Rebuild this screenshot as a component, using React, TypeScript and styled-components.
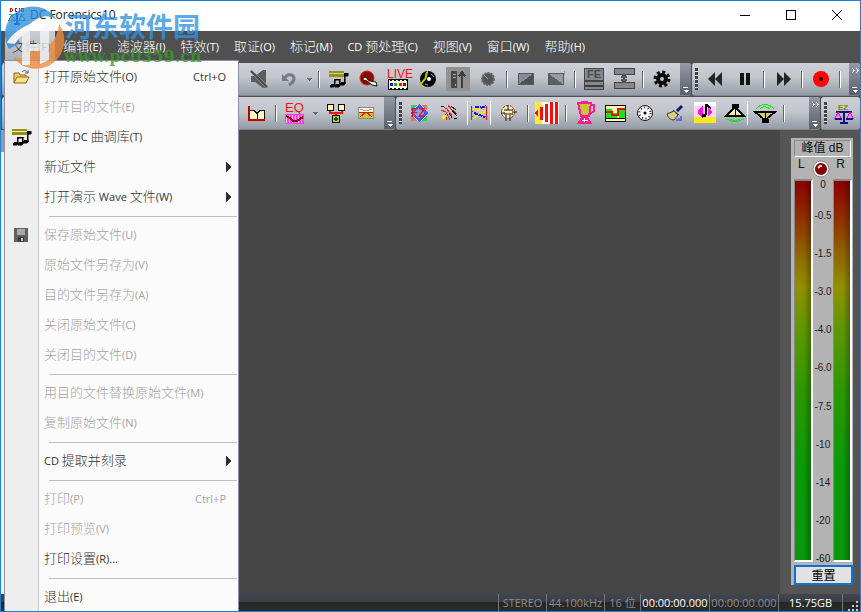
import React from "react";
import styled, { createGlobalStyle, css } from "styled-components";

const UI_FONT = `"Open Sans", "Noto Sans CJK SC", sans-serif`;

const GlobalStyle = createGlobalStyle`
  * { box-sizing: border-box; }
  body { margin: 0; background: #fff; font-family: ${UI_FONT}; font-size: 12px; overflow: hidden; }
  button { font: inherit; color: inherit; border: 0; padding: 0; background: none; }
  ul { list-style: none; margin: 0; padding: 0; }
  svg { overflow: visible; }
`;

const Window = styled.div`
  position: relative;
  display: flex;
  flex-direction: column;
  height: 100vh;
  border: 1px solid #1683d8;
  background: #505050;
  overflow: hidden;
`;

/* ---------- title bar ---------- */

const TitleBar = styled.header`
  display: flex;
  align-items: center;
  flex: none;
  height: 30px;
  padding-left: 7px;
  background: #fff;
  color: #222;
`;

const Title = styled.h1`
  flex: 1;
  margin: 0 0 0 4px;
  font-size: 12px;
  line-height: 28px;
  height: 30px;
  font-weight: 400;
`;

const CaptionButton = styled.button`
  display: grid;
  place-items: center;
  width: 46px;
  height: 30px;
`;

/* ---------- menu bar ---------- */

const MenuBar = styled.nav`
  display: flex;
  align-items: stretch;
  gap: 1px;
  flex: none;
  height: 31px;
  padding-left: 4px;
`;

const MenuBarButton = styled.button<{ $open?: boolean }>`
  padding: 0 7px;
  color: #fff;
  line-height: 30px;
  white-space: nowrap;
  ${(p) =>
    p.$open &&
    css`
      padding-right: 5px;
      color: #333;
      background: linear-gradient(#c9cdd5, #a9aeb9);
    `}
`;

const Cjk = styled.span`
  font-family: "Noto Sans CJK SC", sans-serif;
  font-size: 13px;
  font-weight: 300;
`;

const Latin = styled.span`
  font-size: 11px;
`;

function Mixed({ text }: { text: string }) {
  return (
    <>
      {text
        .split(/([\u4e00-\u9fff]+)/)
        .filter(Boolean)
        .map((run, i) =>
          /[\u4e00-\u9fff]/.test(run) ? <Cjk key={i}>{run}</Cjk> : <Latin key={i}>{run}</Latin>
        )}
    </>
  );
}

/* ---------- drop-down menu ---------- */

const DropMenu = styled.ul`
  position: absolute;
  left: 3px;
  top: 59px;
  width: 235px;
  padding: 1px 0;
  border: 1px solid #8a93a5;
  background: linear-gradient(90deg, #eee 33px, #c5c5c5 33px, #c5c5c5 34px, #fbfbfb 34px);
`;

const MenuRow = styled.button<{ $off?: boolean }>`
  display: grid;
  grid-template-columns: 32px 1fr auto;
  align-items: center;
  width: 100%;
  height: 30px;
  padding: 0 12px 2px 0;
  text-align: left;
  white-space: nowrap;
  color: ${(p) => (p.$off ? "#a3a3a3" : "#333")};
`;

const RowIcon = styled.span`
  display: grid;
  place-items: center;
`;

const RowLabel = styled.span`
  padding-left: 7px;
  line-height: 28px;
`;

const RowHint = styled.span<{ $arrow?: boolean }>`
  display: flex;
  font-size: 11px;
  margin-right: ${(p) => (p.$arrow ? "-6px" : "0")};
`;

const MenuRule = styled.li`
  height: 8px;
  padding: 4px 1px 0 44px;
  &::before {
    content: "";
    display: block;
    height: 1px;
    background: #bfbfbf;
  }
`;

/* ---------- toolbars ---------- */

const ToolRow = styled.div`
  display: flex;
  flex: none;
  gap: 1px;
  height: 33px;
  margin: 1px 0 0 1px;
`;

const Bar = styled.div<{ $lead: number; $grow?: boolean }>`
  display: flex;
  align-items: stretch;
  flex: ${(p) => (p.$grow ? "1 0 auto" : "none")};
  padding-left: ${(p) => p.$lead}px;
  border-radius: 3px;
  border-bottom: 1px solid #7c8491;
  background: linear-gradient(#cdd1d7, #c2c6cc 45%, #959ca6);
`;

const Grip = styled.span`
  width: 3px;
  margin: 5px 2px 5px 0;
  background: repeating-linear-gradient(#3e434b 0 3px, #e6e8ec 3px 4px);
`;

const ToolButton = styled.button<{ $narrow?: boolean }>`
  display: grid;
  place-items: center;
  width: ${(p) => (p.$narrow ? "11px" : "30px")};
`;

const Divider = styled.span`
  width: 8px;
  padding: 8px 0 7px 3px;
  &::before {
    content: "";
    display: block;
    width: 2px;
    height: 100%;
    background: linear-gradient(90deg, #5d646f 1px, #fff 1px);
  }
`;

const Overflow = styled.button<{ $more?: boolean; $gap: number }>`
  display: flex;
  flex-direction: column;
  justify-content: ${(p) => (p.$more ? "space-between" : "flex-end")};
  align-items: center;
  width: 11px;
  padding: 5px 0 2px;
  margin-left: ${(p) => (p.$gap ? p.$gap + "px" : "auto")};
  border-radius: 0 3px 3px 0;
  background: linear-gradient(#949ba6, #59606c);
`;

/* ---------- work area ---------- */

const Work = styled.main`
  display: flex;
  flex: 1;
  min-height: 0;
`;

const LeftEdge = styled.div`
  width: 3px;
  background: linear-gradient(#9a9a9a 22px, #f3f3f3 22px);
`;

const Canvas = styled.section`
  flex: 1;
  background: #464646;
`;

const SidePane = styled.aside`
  display: flex;
  width: 80px;
  padding: 8px 7px 9px 11px;
  background: #555;
`;

const PeakPanel = styled.section`
  display: flex;
  flex-direction: column;
  flex: 1;
  padding-left: 3px;
  background: #b3b3b3;
`;

const PeakTitle = styled.h2`
  margin: 2px 2px 0 0;
  border: 1px solid;
  border-color: #8a8a8a #fff #fff #8a8a8a;
  text-align: center;
  font: 400 12px/15px "Liberation Sans", "Noto Sans CJK SC", sans-serif;
  color: #111;
`;

const Channels = styled.div`
  display: flex;
  justify-content: space-between;
  height: 22px;
  padding: 0 8px 0 4px;
  font: 12px/15px "Liberation Sans", sans-serif;
  color: #111;
  svg { margin-top: 3px; }
`;

const Meters = styled.div`
  display: flex;
  flex: 1;
  padding-right: 1px;
`;

const Meter = styled.div`
  width: 19px;
  border: 1px solid;
  border-width: 2px 2px 2px 1px;
  border-color: #888 #fff #fff #888;
  background:
    linear-gradient(90deg, rgba(0, 0, 0, 0) 55%, rgba(0, 0, 0, 0.28)),
    linear-gradient(#8c0000, #903000 10%, #906400 19%, #909000 28%, #5c9800 40%, #2e9800 55%, #0a9a08 75%, #0a980a);
`;

const Scale = styled.ol`
  display: flex;
  flex-direction: column;
  justify-content: space-between;
  flex: 1;
  margin: 0 0 -3px;
  padding: 0;
  list-style: none;
  text-align: center;
  font: 10px/12px "Liberation Sans", sans-serif;
  color: #1c1c1c;
  li:first-child { margin-bottom: -7px; }
`;

const ResetButton = styled.button`
  height: 20px;
  margin-top: 3px;
  border: 2px solid #0a74d6;
  background: #e2e2e2;
  font: 12px/16px "Noto Sans CJK SC", sans-serif;
  color: #000;
`;

/* ---------- status bar ---------- */

const StatusBar = styled.footer`
  display: flex;
  justify-content: flex-end;
  flex: none;
  height: 17px;
  background: linear-gradient(#40454f, #3a3e47 45%, #262626 50%, #2b2b2b);
`;

const StatusCell = styled.span<{ $w: number; $bright?: boolean }>`
  width: ${(p) => p.$w}px;
  border-left: 1px solid #777;
  text-align: center;
  white-space: nowrap;
  font-size: 11px;
  line-height: 17px;
  color: ${(p) => (p.$bright ? "#fff" : "#8d8d8d")};
`;

const Watermark = styled.div`
  position: absolute;
  left: 3px;
  top: 6px;
  display: flex;
  opacity: 0.78;
  pointer-events: none;
`;

const WatermarkText = styled.div`
  margin-left: 1px;
  color: #2f93e0;
  font: 700 27px/38px "Noto Sans CJK SC", sans-serif;
`;

const WatermarkSite = styled.div`
  color: #3a9a2c;
  font: 700 16px/24px "DejaVu Serif", serif;
`;

/* ---------- icons ---------- */

function Svg({ w = 24, h = 24, smooth, children }: { w?: number; h?: number; smooth?: boolean; children: React.ReactNode }) {
  return (
    <svg width={w} height={h} viewBox={`0 0 ${w} ${h}`} shapeRendering={smooth ? "auto" : "crispEdges"} fill="none" aria-hidden="true">
      {children}
    </svg>
  );
}

const IconText = styled.text`
  font-family: "Liberation Sans", sans-serif;
`;

const Notes = () => (
  <Svg>
    <path d="M3 4h15v2H3zM3 7h15v3H3z" fill="#959500" />
    <path d="M8 12h6v1H9v5H8zM13 12h1v6h-1zM18 6h4v3h-3v8h-1zM5 17h3v1h1v1H8v1H4v-2h1zM10 17h3v1h1v1h-1v1H9v-2h1zM15 15h4v2h-1v1h-4v-2h1z" fill="#000" stroke="#000" strokeWidth="0.5" />
  </Svg>
);

const icons: Record<string, React.ReactNode> = {
  mute: (
    <Svg smooth>
      <path d="M4 9h4l8-6h3v18h-3l-8-6H4z" fill="#5c5c5c" />
      <path d="M4 4l16 16" stroke="#aeb1b5" strokeWidth="3" />
      <path d="M4 4l16 16" stroke="#484848" strokeWidth="2" />
    </Svg>
  ),
  undo: (
    <Svg smooth>
      <path d="M8 11c2-5 9-4 9 1 0 3-2 4-5 6" stroke="#777b80" strokeWidth="3" />
      <path d="M5 7v7h7z" fill="#777b80" />
    </Svg>
  ),
  caret: (
    <Svg w={7} h={24}>
      <path d="M1 11h5l-2.500 3z" fill="#666a72" />
    </Svg>
  ),
  notes: <Notes />,
  pan: (
    <Svg smooth>
      <circle cx="11" cy="11" r="7" fill="#861009" stroke="#e01c10" />
      <path d="M7 11c4-3 4 3 7 3l6 1 1 4-5-1-5-4-4-1z" fill="#fffbd0" stroke="#111" />
    </Svg>
  ),
  live: (
    <Svg h={26}>
      <IconText x="1" y="12" fontSize="12" fill="#f51414">
        LIVE
      </IconText>
      <path d="M2.500 13.500h19v10h-19z" fill="#fffbd8" stroke="#000" />
      <path d="M4 14.500h17" stroke="#000" strokeDasharray="2 2" />
      <path d="M4 17h3v3H4z" fill="#1515ff" />
      <path d="M8 17h3v3H8z" fill="#18b018" />
      <path d="M13 17h3v3h-3z" fill="#f01818" />
      <path d="M17 17h3v3h-3z" fill="#801010" />
      <path d="M4 22.500h17" stroke="#000" strokeDasharray="2 2" />
    </Svg>
  ),
  disc: (
    <Svg smooth>
      <circle cx="12" cy="12" r="8" fill="#050505" />
      <path d="M15 7a6 6 0 0 1 3 3M9 17a6 6 0 0 0 3 1" stroke="#aaa" />
      <circle cx="13" cy="12" r="2" fill="#fff" />
      <path d="M12 5c-3 1-1 5-3 7l-4 5v3" stroke="#c8c000" strokeWidth="2" />
    </Svg>
  ),
  server: (
    <Svg>
      <path d="M0 0h24v24H0z" fill="#929292" />
      <path d="M5 4h6v17H5z" fill="#484848" />
      <path d="M7 7h3v1H7zM7 10h3v1H7zM9 17h1v2H9z" fill="#aaa" />
      <path d="M16 21V6M12.500 9.500L16 5l3.500 4.500" stroke="#3f3f3f" strokeWidth="2" />
    </Svg>
  ),
  knob: (
    <Svg smooth>
      <circle cx="12" cy="12" r="6" fill="#555" stroke="#666" strokeWidth="2" strokeDasharray="2 1" />
      <path d="M12 12l-4-4" stroke="#999" />
    </Svg>
  ),
  fadeIn: (
    <Svg>
      <path d="M4.500 6.500h15v11h-15z" fill="#888b90" stroke="#55585d" />
      <path d="M5 17L19 7v10z" fill="#4e5054" />
    </Svg>
  ),
  fadeOut: (
    <Svg>
      <path d="M4.500 6.500h15v11h-15z" fill="#999ca1" stroke="#55585d" />
      <path d="M5 7l14 10H5z" fill="#5d6064" />
      <path d="M20.500 4v4" stroke="#999" />
    </Svg>
  ),
  fe: (
    <Svg>
      <path d="M2.500 1.500h19v12h-19zM2.500 14.500h19v8h-19z" fill="#85888c" stroke="#444" />
      <IconText x="5" y="11" fontSize="11" fontWeight="700" fill="#484a4e">
        FE
      </IconText>
      <path d="M3 18.500h18" stroke="#3c3c3c" strokeWidth="2" />
    </Svg>
  ),
  split: (
    <Svg>
      <path d="M2.500 1.500h20v6h-20zM2.500 15.500h20v6h-20z" fill="#85888c" stroke="#444" />
      <path d="M12 8v7M9 10.500l3-2.500 3 2.500M9 12.500l3 2.500 3-2.500" stroke="#555" strokeWidth="2" />
    </Svg>
  ),
  gear: (
    <Svg smooth>
      <circle cx="12" cy="12" r="7" stroke="#0c0c0c" strokeWidth="3" strokeDasharray="3 2.500" />
      <circle cx="12" cy="12" r="4" stroke="#0c0c0c" strokeWidth="4" />
    </Svg>
  ),
  rewind: (
    <Svg smooth>
      <path d="M5 12l7-7v14zM12 12l7-7v14z" fill="#252525" />
    </Svg>
  ),
  pause: (
    <Svg>
      <path d="M7 6h4v12H7zM13 6h4v12h-4z" fill="#111" />
    </Svg>
  ),
  forward: (
    <Svg smooth>
      <path d="M6 5l7 7-7 7zM13 5l7 7-7 7z" fill="#252525" />
    </Svg>
  ),
  record: (
    <Svg smooth>
      <circle cx="12" cy="12" r="8" fill="#fb0505" />
      <circle cx="12" cy="12" r="2" fill="#300" />
    </Svg>
  ),
  curve: (
    <Svg>
      <path d="M5 9h5l2 3 3-3h4v9H5z" fill="#fffbc8" />
      <path d="M3.500 5v14M3 18.500h17" stroke="#c00000" strokeWidth="2" />
      <path d="M5 9.500h4l3 3 3-3h4.500V18M12.500 12v6" stroke="#111" />
    </Svg>
  ),
  eq: (
    <Svg>
      <IconText x="2" y="11" fontSize="13" fill="#f51414">
        EQ
      </IconText>
      <path d="M2 13h19v10H2z" fill="#ff3cf0" />
      <path d="M3.500 14v8M6.500 14v8M9.500 14v8M12.500 14v8M15.500 14v8M18.500 14v8" stroke="#ffc4fa" />
      <path d="M3 15l4 2 3 3h4l6-4" stroke="#900000" strokeWidth="2" />
    </Svg>
  ),
  blocks: (
    <Svg>
      <path d="M6 9v3h12V9M12 12v3" stroke="#f01414" strokeWidth="2" />
      <path d="M3.500 3.500h6v6h-6zM14.500 3.500h6v6h-6z" fill="#fffbb0" stroke="#000" />
      <path d="M8.500 14.500h7v7h-7z" fill="#c6c840" stroke="#000" />
      <path d="M11 16h2v4h-2zM10 17h4v2h-4z" fill="#006000" />
    </Svg>
  ),
  chart: (
    <Svg>
      <path d="M4.500 6.500h15v11h-15z" fill="#fffce0" stroke="#888" />
      <path d="M5 12h14v5H5z" fill="#c9c730" />
      <path d="M5 11.500h14M6 16l6-5 6 5" stroke="#d21c10" />
      <path d="M6 8l6 2 6-2" stroke="#e88" />
    </Svg>
  ),
  fz: (
    <Svg>
      <path d="M4 4h16v16H4z" fill="#d8ffe0" />
      <path d="M20 4h-6l6 6zM4 20h6l-6-6z" fill="#ff6a50" />
      <path d="M4 4h6l-6 6zM20 20h-6l6-6z" fill="#20d070" />
      <path d="M12 3l9 9-9 9-9-9z" fill="#3a5cff" />
      <path d="M12 6l5 6-5 6-5-6z" fill="#8aa4ff" />
      <IconText x="4" y="16" fontSize="12" fontWeight="700" fill="#e8101c">
        FZ
      </IconText>
    </Svg>
  ),
  waves: (
    <Svg>
      <path d="M5 5l5 3 5 7M4 9l5 2 4 8M11 4l3 4 6 5M8 13l2 6" stroke="#f01818" />
      <path d="M14 5l5 4M14 8l6 7M12 12l3 5M4 5h3M17 17h3" stroke="#101010" />
      <circle cx="7" cy="16" r="2" fill="#ffee00" />
    </Svg>
  ),
  scatter: (
    <Svg>
      <path d="M0.500 0v24M23.500 0v24" stroke="#fff" />
      <path d="M4.500 5v14M19.500 5v14M4 10h2M4 15h2M18 10h2M18 15h2" stroke="#e01818" />
      <path d="M6 8l8 1M6 17l13-7" stroke="#ffe800" strokeWidth="2" />
      <path d="M8 6h6M14 7l5-2M7 12l11 4" stroke="#1515f0" strokeWidth="2" strokeDasharray="4 1" />
    </Svg>
  ),
  tube: (
    <Svg smooth>
      <circle cx="11" cy="11" r="6.500" fill="#fff2b8" stroke="#d02818" strokeDasharray="3 1" />
      <path d="M7 9h9M7 13h9M4 12h4M15 11h5M11 4v5M9 14v6M13 14v6" stroke="#111" />
    </Svg>
  ),
  stripes: (
    <Svg>
      <path d="M0 1h24v22H0z" fill="#fff" />
      <path d="M0 1h7v22H0z" fill="#ffe93c" />
      <path d="M0 12l3-4v8zM5 6h3v13H5zM10 3h3v18h-3zM15 1h3v22h-3zM20 1h3v22h-3z" fill="#fb0d0d" />
    </Svg>
  ),
  blender: (
    <Svg h={26}>
      <path d="M5 3h13l-2 13H8z" fill="#c8c634" stroke="#ff1c90" strokeWidth="2" />
      <path d="M8 2h7M17 5h4v6l-4 3" stroke="#ff1c90" strokeWidth="2" />
      <path d="M8 17h7l4 7H4z" fill="#ff1c90" />
      <path d="M9 20h6M11 18v4" stroke="#fff" />
    </Svg>
  ),
  levels: (
    <Svg>
      <path d="M2.500 4.500h20v16h-20z" fill="#fffbb0" stroke="#000" />
      <path d="M3 8h6v9H3zM9 12h5v5H9zM16 8h6v9h-6z" fill="#12e812" />
      <path d="M3 10.500h6v3h6v-6h7" stroke="#e01414" strokeWidth="2" />
      <path d="M3 17.500h19" stroke="#000" />
    </Svg>
  ),
  clock: (
    <Svg smooth>
      <circle cx="12" cy="12" r="7.500" fill="#fff" stroke="#111" />
      <circle cx="12" cy="12" r="5.500" stroke="#222" strokeWidth="2" strokeDasharray="1 2.500" />
      <circle cx="12" cy="12" r="1.500" fill="#000" />
    </Svg>
  ),
  brush: (
    <Svg smooth>
      <path d="M14 10l5-5" stroke="#141470" strokeWidth="3" />
      <path d="M4 13l7-3 4 4-4 5c-3 0-6-2-7-6z" fill="#d5d17a" stroke="#333" />
      <path d="M10 9l6 5" stroke="#444" />
      <path d="M14 20v-2M16 20v-3M18 20v-5" stroke="#2020ff" />
    </Svg>
  ),
  note: (
    <Svg>
      <path d="M1 1h22v21H1z" fill="#ffd8f0" />
      <path d="M1 1h22v4H1z" fill="#fff" />
      <path d="M1 16h22v6H1z" fill="#ffe81c" />
      <path d="M10 5v12l-5-4V9zM15 7l4 4-4 4z" fill="#ff10e8" />
      <path d="M12 3h2v11h-2zM14 3l4 3v2l-4-2zM9 13h4v3H9z" fill="#000" />
    </Svg>
  ),
  speakerDown: (
    <Svg w={26}>
      <path d="M10 3h7v4h-7z" fill="#000" />
      <path d="M13 6l9 9H4z" fill="#fff89a" stroke="#000" strokeWidth="2" />
      <path d="M13 7v8" stroke="#000" />
      <path d="M4 17c5 5 13 5 18 0M8 18c3 2 7 2 10 0" stroke="#12e812" />
      <path d="M25.500 0v24" stroke="#fff" />
    </Svg>
  ),
  speakerUp: (
    <Svg>
      <path d="M2 11h20l-10 8z" fill="#cfcc6a" stroke="#000" strokeWidth="2" />
      <path d="M12 11v8" stroke="#000" />
      <path d="M9 18h7v4H9z" fill="#000" />
      <path d="M3 8c5-6 13-6 18 0M7 8c3-3 7-3 10 0" stroke="#12e812" />
    </Svg>
  ),
  scales: (
    <Svg>
      <IconText x="6" y="9" fontSize="8" fontWeight="700" fill="#858500">
        EZ
      </IconText>
      <path d="M4 10.500h16M12 10v11M8 21.500h8" stroke="#101080" strokeWidth="2" />
      <path d="M6 11l-3 6h6zM18 11l-3 6h6z" fill="#ff80ff" stroke="#e010d0" />
      <path d="M3 18h7M14 18h7" stroke="#101080" strokeWidth="2" />
    </Svg>
  ),
};

const Chevrons = () => (
  <Svg w={8} h={5}>
    <path d="M1 0l2 2.500L1 5M5 0l2 2.500L5 5" stroke="#f2f2f2" />
  </Svg>
);

const OverflowMark = () => (
  <Svg w={7} h={6}>
    <path d="M1 0h5v1H1zM2 3h5l-2.500 3z" fill="#fff" />
  </Svg>
);

const FolderIcon = () => (
  <Svg w={18} h={16} smooth>
    <path d="M2 14V4h5l1 2h6v3" fill="#f3c95c" stroke="#8c6820" />
    <path d="M2 14l3-6h12l-3 6z" fill="#ffe08a" stroke="#8c6820" />
    <path d="M10 3c2-2 4-2 6 1M16 1v3h-3" stroke="#49658c" />
  </Svg>
);

const SaveIcon = () => (
  <Svg w={14} h={14}>
    <path d="M0 0h14v14H0z" fill="#5f5f5f" />
    <path d="M3 1h8v6H3z" fill="#a9a9a9" />
    <path d="M4 9h6v5H4z" fill="#3c3c3c" />
    <path d="M7 10h2v3H7z" fill="#c8c8c8" />
  </Svg>
);

const SubArrow = () => (
  <Svg w={5} h={10}>
    <path d="M0 0l5 5-5 5z" fill="#303030" />
  </Svg>
);

const AppIcon = () => (
  <Svg w={18} h={18}>
    <path d="M2.500 1v4M3 1.500h1M3 4.500h1M4.500 2v2M9 1.500H7.500v3H9M11.500 1v4M13.500 1h2v3.500h-2z" stroke="#e00000" />
    <path d="M1 7.500h16" stroke="#20c0b0" />
    <path d="M9 6v10M6 16.500h6" stroke="#1020d0" strokeWidth="2" />
    <path d="M4 8l-3 5h6zM14 8l-3 5h6z" stroke="#777" />
  </Svg>
);

const Led = () => (
  <Svg w={18} h={18} smooth>
    <circle cx="9" cy="9" r="7" fill="#800000" stroke="#f5f5f5" strokeWidth="2" />
    <circle cx="9" cy="9" r="8" stroke="#8a8a8a" />
    <path d="M6 8l2-2h2" stroke="#ffd0d0" strokeWidth="2" />
  </Svg>
);

const WatermarkLogo = () => (
  <Svg w={60} h={60} smooth>
    <path d="M5 42A28 28 0 0 1 53 13C45 7 33 8 25 18 15 21 5 31 5 42z" fill="#2b8fdc" />
    <path d="M5 42C3 24 20 9 40 9c-17 6-25 17-26 28z" fill="#2b8fdc" />
    <path d="M55 17a28 28 0 0 1-46 33c8 3 14 1 19-4 13-1 26-12 27-29z" fill="#ee8a38" />
    <path d="M18 58V30c0-5 3-7 8-8v15h10V22l9-5v36l-9 4V44H26v14z" fill="#f4f4f4" />
    <path d="M26 44h10v14l-10 1z" fill="#ee8a38" />
    <path d="M3 36c6-14 36-28 52-22-14-1-35 8-44 23z" fill="#fff" />
  </Svg>
);

/* ---------- data ---------- */

const menus = ["文件(F)", "编辑(E)", "滤波器(I)", "特效(T)", "取证(O)", "标记(M)", "CD 预处理(C)", "视图(V)", "窗口(W)", "帮助(H)"];

type Entry = { label: string; off?: boolean; hint?: string; sub?: boolean; icon?: React.ReactNode } | null;

const entries: Entry[] = [
  { label: "打开原始文件(O)", hint: "Ctrl+O", icon: <FolderIcon /> },
  { label: "打开目的文件(E)", off: true },
  { label: "打开 DC 曲调库(T)", icon: <Notes /> },
  { label: "新近文件", sub: true },
  { label: "打开演示 Wave 文件(W)", sub: true },
  null,
  { label: "保存原始文件(U)", off: true, icon: <SaveIcon /> },
  { label: "原始文件另存为(V)", off: true },
  { label: "目的文件另存为(A)", off: true },
  { label: "关闭原始文件(C)", off: true },
  { label: "关闭目的文件(D)", off: true },
  null,
  { label: "用目的文件替换原始文件(M)", off: true },
  { label: "复制原始文件(N)", off: true },
  null,
  { label: "CD 提取并刻录", sub: true },
  null,
  { label: "打印(P)", off: true, hint: "Ctrl+P" },
  { label: "打印预览(V)", off: true },
  { label: "打印设置(R)..." },
  null,
  { label: "退出(E)" },
];

const mainTools = "mute undo caret | notes pan live disc server knob | fadeIn fadeOut | fe split | gear";
const playTools = "rewind pause | forward | record |";
const filterTools = "curve | eq caret blocks chart";
const effectTools = "fz waves scatter tube | stripes | blender levels clock brush note speakerDown speakerUp |";
const levels = ["0", "-0.5", "-1.5", "-3.0", "-4.0", "-6.0", "-7.5", "-10", "-14", "-20", "-60"];

function Tools({ list }: { list: string }) {
  return (
    <>
      {list.split(" ").map((name, i) =>
        name === "|" ? (
          <Divider key={i} />
        ) : (
          <ToolButton key={i} type="button" aria-label={name} $narrow={name === "caret"}>
            {icons[name]}
          </ToolButton>
        )
      )}
    </>
  );
}

function More({ chevrons, gap = 0 }: { chevrons?: boolean; gap?: number }) {
  return (
    <Overflow type="button" aria-label="More" $more={chevrons} $gap={gap}>
      {chevrons && <Chevrons />}
      <OverflowMark />
    </Overflow>
  );
}

export default function App() {
  return (
    <Window>
      <GlobalStyle />
      <TitleBar>
        <AppIcon />
        <Title>DC Forensics10</Title>
        <CaptionButton type="button" aria-label="Minimize">
          <Svg w={12} h={12}>
            <path d="M1 5.500h10" stroke="#000" />
          </Svg>
        </CaptionButton>
        <CaptionButton type="button" aria-label="Maximize">
          <Svg w={12} h={12}>
            <path d="M1.500 0.500h9v9h-9z" stroke="#000" />
          </Svg>
        </CaptionButton>
        <CaptionButton type="button" aria-label="Close">
          <Svg w={12} h={12} smooth>
            <path d="M1 0l10 10M11 0L1 10" stroke="#000" />
          </Svg>
        </CaptionButton>
      </TitleBar>

      <MenuBar>
        {menus.map((m, i) => (
          <MenuBarButton key={m} type="button" $open={i === 0}>
            <Mixed text={m} />
          </MenuBarButton>
        ))}
      </MenuBar>

      <ToolRow>
        <Bar $lead={242}>
          <Tools list={mainTools} />
          <More gap={3} />
        </Bar>
        <Bar $lead={3} $grow>
          <Grip />
          <Tools list={playTools} />
          <More chevrons />
        </Bar>
      </ToolRow>
      <ToolRow>
        <Bar $lead={240}>
          <Tools list={filterTools} />
          <More gap={3} />
        </Bar>
        <Bar $lead={3}>
          <Grip />
          <Tools list={effectTools} />
          <More chevrons gap={21} />
        </Bar>
        <Bar $lead={3} $grow>
          <Grip />
          <Tools list="scales" />
        </Bar>
      </ToolRow>

      <Work>
        <LeftEdge />
        <Canvas />
        <SidePane>
          <PeakPanel>
            <PeakTitle>峰值 dB</PeakTitle>
            <Channels>
              <span>L</span>
              <Led />
              <span>R</span>
            </Channels>
            <Meters>
              <Meter />
              <Scale>
                {levels.map((l) => (
                  <li key={l}>{l}</li>
                ))}
              </Scale>
              <Meter />
            </Meters>
            <ResetButton type="button">重置</ResetButton>
          </PeakPanel>
        </SidePane>
      </Work>

      <StatusBar>
        <StatusCell $w={48}>STEREO</StatusCell>
        <StatusCell $w={58}>44.100kHz</StatusCell>
        <StatusCell $w={36}>16 位</StatusCell>
        <StatusCell $w={69} $bright>
          00:00:00.000
        </StatusCell>
        <StatusCell $w={69}>00:00:00.000</StatusCell>
        <StatusCell $w={64} $bright>
          15.75GB
        </StatusCell>
        <StatusCell $w={18}>
          <Svg w={14} h={17}>
            <path d="M11 7h2v2h-2zM7 11h2v2H7zM11 11h2v2h-2zM3 15h2v2H3zM7 15h2v2H7zM11 15h2v2h-2z" fill="#ccc" />
          </Svg>
        </StatusCell>
      </StatusBar>

      <DropMenu>
        {entries.map((e, i) =>
          e === null ? (
            <MenuRule key={i} role="separator" />
          ) : (
            <li key={i}>
              <MenuRow type="button" $off={e.off}>
                <RowIcon>{e.icon}</RowIcon>
                <RowLabel>
                  <Mixed text={e.label} />
                </RowLabel>
                <RowHint $arrow={e.sub}>{e.sub ? <SubArrow /> : e.hint}</RowHint>
              </MenuRow>
            </li>
          )
        )}
      </DropMenu>

      <Watermark aria-hidden="true">
        <WatermarkLogo />
        <div>
          <WatermarkText>河东软件园</WatermarkText>
          <WatermarkSite>www.pc0359.cn</WatermarkSite>
        </div>
      </Watermark>
    </Window>
  );
}
